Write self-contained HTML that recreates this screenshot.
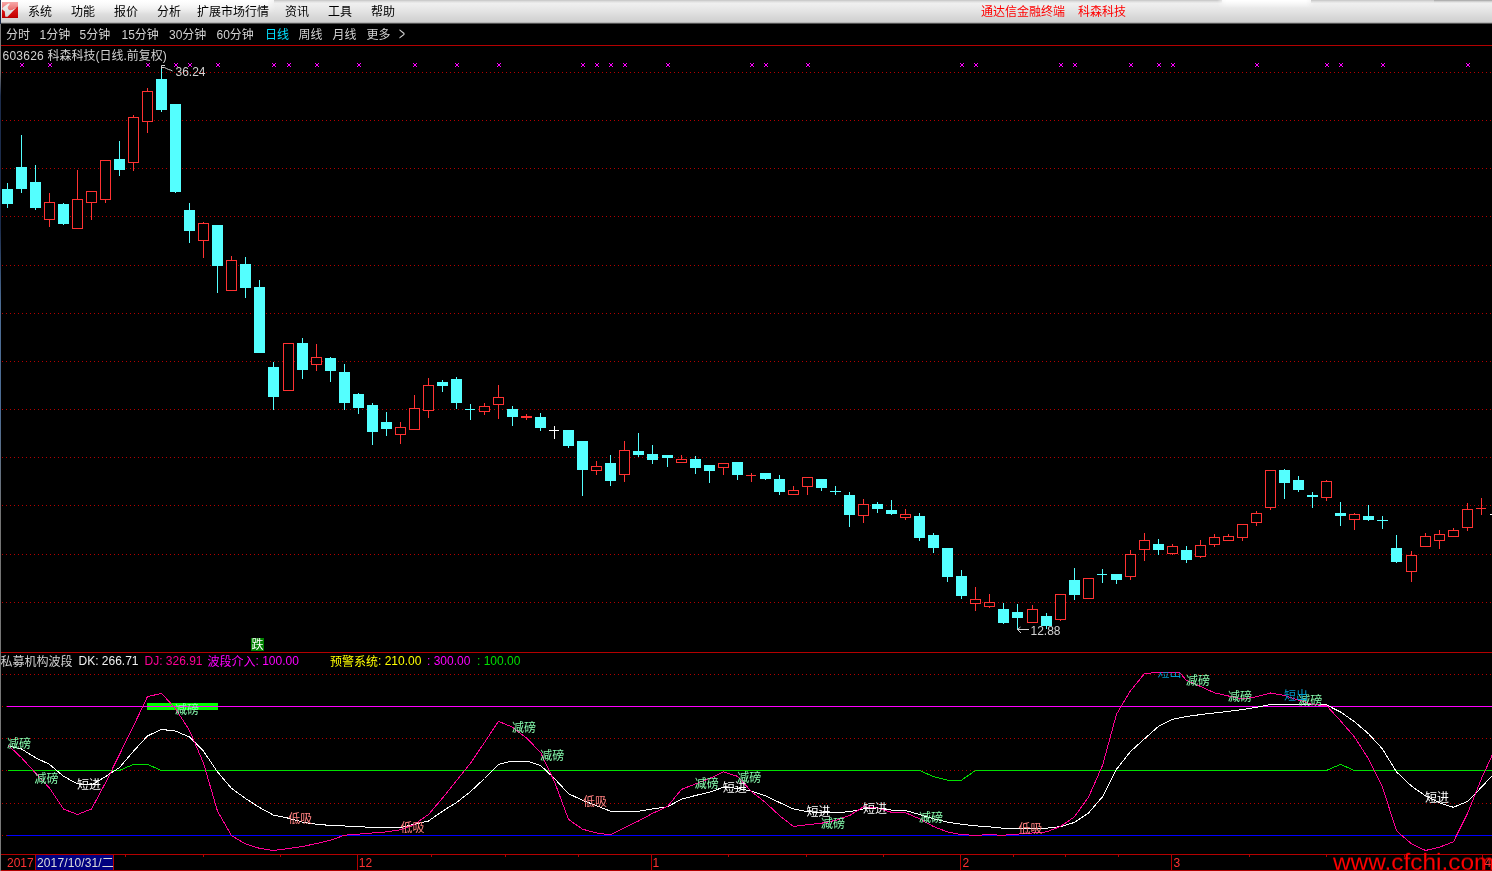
<!DOCTYPE html>
<html lang="zh-CN"><head><meta charset="utf-8"><title>通达信金融终端 科森科技</title>
<style>
html,body{margin:0;padding:0;background:#000;}
body{width:1492px;height:871px;overflow:hidden;position:relative;font-family:"Liberation Sans","Noto Sans CJK SC",sans-serif;font-size:12px;line-height:14px;color:#d2d2d2;}
.abs{position:absolute;white-space:nowrap;}
#menubar{position:absolute;left:0;top:0;width:1492px;height:24px;background:linear-gradient(#f4f4f4 0px,#ececec 6px,#e4e4e4 11px,#d8d8d8 17px,#d0d0d0 22px,#b4b4b4 22px,#b4b4b4 23px,#505050 23px,#505050 24px);}
#menubar .m{position:absolute;top:5px;color:#000;font-size:12px;line-height:14px;white-space:nowrap;}
#menubar .t{position:absolute;top:5px;color:#ff0000;font-size:12px;line-height:14px;white-space:pre;}
#logo{position:absolute;left:2px;top:2px;width:16px;height:16px;}
#tb .p{position:absolute;top:28px;font-size:12px;line-height:14px;color:#d2d2d2;white-space:nowrap;}
#chart{position:absolute;left:0;top:0;will-change:transform;}
#menubar,#tb,#wm{will-change:transform;}
svg text{font-family:"Liberation Sans","Noto Sans CJK SC",sans-serif;font-size:12px;}
#wm{position:absolute;left:1333px;top:849.4px;transform:scaleY(0.945);transform-origin:0 0;font-size:24.4px;line-height:28px;color:#ff0000;white-space:nowrap;}

</style></head><body>
<svg id="chart" width="1492" height="871" viewBox="0 0 1492 871" shape-rendering="crispEdges">
<rect x="0" y="0" width="1492" height="871" fill="#000"/>
<defs><linearGradient id="lb" gradientUnits="userSpaceOnUse" x1="0" y1="24" x2="0" y2="871"><stop offset="0" stop-color="#7c7c7c"/><stop offset="0.055" stop-color="#7c7c7c"/><stop offset="0.085" stop-color="#1c2c4c"/><stop offset="0.24" stop-color="#1c2c4c"/><stop offset="0.33" stop-color="#4c6c94"/><stop offset="0.46" stop-color="#4c6c94"/><stop offset="0.58" stop-color="#747474"/><stop offset="1" stop-color="#7a7a7a"/></linearGradient></defs>
<rect x="0" y="24" width="1" height="847" fill="url(#lb)"/>
<rect x="1" y="45" width="1491" height="1" fill="#b40000"/>
<rect x="1" y="652" width="1491" height="1" fill="#b40000"/>
<rect x="1" y="854" width="1491" height="1" fill="#b40000"/>
<rect x="1" y="870" width="1491" height="1" fill="#b40000"/>
<line x1="2" y1="72.5" x2="1492" y2="72.5" stroke="#b40000" stroke-width="1" stroke-dasharray="1 3"/>
<line x1="2" y1="120.5" x2="1492" y2="120.5" stroke="#b40000" stroke-width="1" stroke-dasharray="1 3"/>
<line x1="2" y1="168.5" x2="1492" y2="168.5" stroke="#b40000" stroke-width="1" stroke-dasharray="1 3"/>
<line x1="2" y1="216.5" x2="1492" y2="216.5" stroke="#b40000" stroke-width="1" stroke-dasharray="1 3"/>
<line x1="2" y1="265.5" x2="1492" y2="265.5" stroke="#b40000" stroke-width="1" stroke-dasharray="1 3"/>
<line x1="2" y1="313.5" x2="1492" y2="313.5" stroke="#b40000" stroke-width="1" stroke-dasharray="1 3"/>
<line x1="2" y1="361.5" x2="1492" y2="361.5" stroke="#b40000" stroke-width="1" stroke-dasharray="1 3"/>
<line x1="2" y1="409.5" x2="1492" y2="409.5" stroke="#b40000" stroke-width="1" stroke-dasharray="1 3"/>
<line x1="2" y1="457.5" x2="1492" y2="457.5" stroke="#b40000" stroke-width="1" stroke-dasharray="1 3"/>
<line x1="2" y1="505.5" x2="1492" y2="505.5" stroke="#b40000" stroke-width="1" stroke-dasharray="1 3"/>
<line x1="2" y1="554.5" x2="1492" y2="554.5" stroke="#b40000" stroke-width="1" stroke-dasharray="1 3"/>
<line x1="2" y1="602.5" x2="1492" y2="602.5" stroke="#b40000" stroke-width="1" stroke-dasharray="1 3"/>
<line x1="2" y1="674.5" x2="1492" y2="674.5" stroke="#b40000" stroke-width="1" stroke-dasharray="1 3"/>
<line x1="2" y1="706.5" x2="1492" y2="706.5" stroke="#b40000" stroke-width="1" stroke-dasharray="1 3"/>
<line x1="2" y1="738.5" x2="1492" y2="738.5" stroke="#b40000" stroke-width="1" stroke-dasharray="1 3"/>
<line x1="2" y1="770.5" x2="1492" y2="770.5" stroke="#b40000" stroke-width="1" stroke-dasharray="1 3"/>
<line x1="2" y1="803.5" x2="1492" y2="803.5" stroke="#b40000" stroke-width="1" stroke-dasharray="1 3"/>
<line x1="2" y1="835.5" x2="1492" y2="835.5" stroke="#b40000" stroke-width="1" stroke-dasharray="1 3"/>
<g stroke="#ff00ff" stroke-width="1" fill="#ff00ff">
<path d="M20 63h1v1h-1zM23 63h1v1h-1zM20 66h1v1h-1zM23 66h1v1h-1zM21 64h2v2h-2z" stroke="none"/>
<path d="M48 63h1v1h-1zM51 63h1v1h-1zM48 66h1v1h-1zM51 66h1v1h-1zM49 64h2v2h-2z" stroke="none"/>
<path d="M146 63h1v1h-1zM149 63h1v1h-1zM146 66h1v1h-1zM149 66h1v1h-1zM147 64h2v2h-2z" stroke="none"/>
<path d="M174 63h1v1h-1zM177 63h1v1h-1zM174 66h1v1h-1zM177 66h1v1h-1zM175 64h2v2h-2z" stroke="none"/>
<path d="M188 63h1v1h-1zM191 63h1v1h-1zM188 66h1v1h-1zM191 66h1v1h-1zM189 64h2v2h-2z" stroke="none"/>
<path d="M216 63h1v1h-1zM219 63h1v1h-1zM216 66h1v1h-1zM219 66h1v1h-1zM217 64h2v2h-2z" stroke="none"/>
<path d="M272 63h1v1h-1zM275 63h1v1h-1zM272 66h1v1h-1zM275 66h1v1h-1zM273 64h2v2h-2z" stroke="none"/>
<path d="M287 63h1v1h-1zM290 63h1v1h-1zM287 66h1v1h-1zM290 66h1v1h-1zM288 64h2v2h-2z" stroke="none"/>
<path d="M315 63h1v1h-1zM318 63h1v1h-1zM315 66h1v1h-1zM318 66h1v1h-1zM316 64h2v2h-2z" stroke="none"/>
<path d="M357 63h1v1h-1zM360 63h1v1h-1zM357 66h1v1h-1zM360 66h1v1h-1zM358 64h2v2h-2z" stroke="none"/>
<path d="M413 63h1v1h-1zM416 63h1v1h-1zM413 66h1v1h-1zM416 66h1v1h-1zM414 64h2v2h-2z" stroke="none"/>
<path d="M455 63h1v1h-1zM458 63h1v1h-1zM455 66h1v1h-1zM458 66h1v1h-1zM456 64h2v2h-2z" stroke="none"/>
<path d="M497 63h1v1h-1zM500 63h1v1h-1zM497 66h1v1h-1zM500 66h1v1h-1zM498 64h2v2h-2z" stroke="none"/>
<path d="M581 63h1v1h-1zM584 63h1v1h-1zM581 66h1v1h-1zM584 66h1v1h-1zM582 64h2v2h-2z" stroke="none"/>
<path d="M595 63h1v1h-1zM598 63h1v1h-1zM595 66h1v1h-1zM598 66h1v1h-1zM596 64h2v2h-2z" stroke="none"/>
<path d="M609 63h1v1h-1zM612 63h1v1h-1zM609 66h1v1h-1zM612 66h1v1h-1zM610 64h2v2h-2z" stroke="none"/>
<path d="M623 63h1v1h-1zM626 63h1v1h-1zM623 66h1v1h-1zM626 66h1v1h-1zM624 64h2v2h-2z" stroke="none"/>
<path d="M666 63h1v1h-1zM669 63h1v1h-1zM666 66h1v1h-1zM669 66h1v1h-1zM667 64h2v2h-2z" stroke="none"/>
<path d="M750 63h1v1h-1zM753 63h1v1h-1zM750 66h1v1h-1zM753 66h1v1h-1zM751 64h2v2h-2z" stroke="none"/>
<path d="M764 63h1v1h-1zM767 63h1v1h-1zM764 66h1v1h-1zM767 66h1v1h-1zM765 64h2v2h-2z" stroke="none"/>
<path d="M806 63h1v1h-1zM809 63h1v1h-1zM806 66h1v1h-1zM809 66h1v1h-1zM807 64h2v2h-2z" stroke="none"/>
<path d="M960 63h1v1h-1zM963 63h1v1h-1zM960 66h1v1h-1zM963 66h1v1h-1zM961 64h2v2h-2z" stroke="none"/>
<path d="M974 63h1v1h-1zM977 63h1v1h-1zM974 66h1v1h-1zM977 66h1v1h-1zM975 64h2v2h-2z" stroke="none"/>
<path d="M1059 63h1v1h-1zM1062 63h1v1h-1zM1059 66h1v1h-1zM1062 66h1v1h-1zM1060 64h2v2h-2z" stroke="none"/>
<path d="M1073 63h1v1h-1zM1076 63h1v1h-1zM1073 66h1v1h-1zM1076 66h1v1h-1zM1074 64h2v2h-2z" stroke="none"/>
<path d="M1129 63h1v1h-1zM1132 63h1v1h-1zM1129 66h1v1h-1zM1132 66h1v1h-1zM1130 64h2v2h-2z" stroke="none"/>
<path d="M1157 63h1v1h-1zM1160 63h1v1h-1zM1157 66h1v1h-1zM1160 66h1v1h-1zM1158 64h2v2h-2z" stroke="none"/>
<path d="M1171 63h1v1h-1zM1174 63h1v1h-1zM1171 66h1v1h-1zM1174 66h1v1h-1zM1172 64h2v2h-2z" stroke="none"/>
<path d="M1255 63h1v1h-1zM1258 63h1v1h-1zM1255 66h1v1h-1zM1258 66h1v1h-1zM1256 64h2v2h-2z" stroke="none"/>
<path d="M1325 63h1v1h-1zM1328 63h1v1h-1zM1325 66h1v1h-1zM1328 66h1v1h-1zM1326 64h2v2h-2z" stroke="none"/>
<path d="M1339 63h1v1h-1zM1342 63h1v1h-1zM1339 66h1v1h-1zM1342 66h1v1h-1zM1340 64h2v2h-2z" stroke="none"/>
<path d="M1381 63h1v1h-1zM1384 63h1v1h-1zM1381 66h1v1h-1zM1384 66h1v1h-1zM1382 64h2v2h-2z" stroke="none"/>
<path d="M1466 63h1v1h-1zM1469 63h1v1h-1zM1466 66h1v1h-1zM1469 66h1v1h-1zM1467 64h2v2h-2z" stroke="none"/>
</g>
<rect x="7" y="183" width="1" height="25" fill="#54ffff"/>
<rect x="2" y="189" width="11" height="15" fill="#54ffff"/>
<rect x="21" y="135" width="1" height="58" fill="#54ffff"/>
<rect x="16" y="167" width="11" height="22" fill="#54ffff"/>
<rect x="35" y="165" width="1" height="45" fill="#54ffff"/>
<rect x="30" y="182" width="11" height="26" fill="#54ffff"/>
<rect x="49" y="193" width="1" height="9" fill="#ff3232"/>
<rect x="49" y="220" width="1" height="7" fill="#ff3232"/>
<rect x="44.5" y="202.5" width="10" height="17" fill="#000" stroke="#ff3232" stroke-width="1"/>
<rect x="63" y="203" width="1" height="22" fill="#54ffff"/>
<rect x="58" y="204" width="11" height="20" fill="#54ffff"/>
<rect x="77" y="170" width="1" height="29" fill="#ff3232"/>
<rect x="72.5" y="199.5" width="10" height="29" fill="#000" stroke="#ff3232" stroke-width="1"/>
<rect x="91" y="203" width="1" height="17" fill="#ff3232"/>
<rect x="86.5" y="191.5" width="10" height="11" fill="#000" stroke="#ff3232" stroke-width="1"/>
<rect x="105" y="200" width="1" height="3" fill="#ff3232"/>
<rect x="100.5" y="160.5" width="10" height="39" fill="#000" stroke="#ff3232" stroke-width="1"/>
<rect x="119" y="141" width="1" height="35" fill="#54ffff"/>
<rect x="114" y="159" width="11" height="11" fill="#54ffff"/>
<rect x="133" y="115" width="1" height="2" fill="#ff3232"/>
<rect x="133" y="163" width="1" height="8" fill="#ff3232"/>
<rect x="128.5" y="117.5" width="10" height="45" fill="#000" stroke="#ff3232" stroke-width="1"/>
<rect x="147" y="88" width="1" height="3" fill="#ff3232"/>
<rect x="147" y="122" width="1" height="11" fill="#ff3232"/>
<rect x="142.5" y="91.5" width="10" height="30" fill="#000" stroke="#ff3232" stroke-width="1"/>
<rect x="161" y="69" width="1" height="43" fill="#54ffff"/>
<rect x="156" y="79" width="11" height="31" fill="#54ffff"/>
<rect x="175" y="104" width="1" height="89" fill="#54ffff"/>
<rect x="170" y="104" width="11" height="88" fill="#54ffff"/>
<rect x="189" y="203" width="1" height="40" fill="#54ffff"/>
<rect x="184" y="210" width="11" height="21" fill="#54ffff"/>
<rect x="203" y="222" width="1" height="1" fill="#ff3232"/>
<rect x="203" y="241" width="1" height="17" fill="#ff3232"/>
<rect x="198.5" y="223.5" width="10" height="17" fill="#000" stroke="#ff3232" stroke-width="1"/>
<rect x="217" y="225" width="1" height="68" fill="#54ffff"/>
<rect x="212" y="225" width="11" height="41" fill="#54ffff"/>
<rect x="231" y="256" width="1" height="4" fill="#ff3232"/>
<rect x="226.5" y="260.5" width="10" height="30" fill="#000" stroke="#ff3232" stroke-width="1"/>
<rect x="245" y="257" width="1" height="41" fill="#54ffff"/>
<rect x="240" y="264" width="11" height="24" fill="#54ffff"/>
<rect x="259" y="280" width="1" height="73" fill="#54ffff"/>
<rect x="254" y="287" width="11" height="66" fill="#54ffff"/>
<rect x="273" y="362" width="1" height="48" fill="#54ffff"/>
<rect x="268" y="367" width="11" height="30" fill="#54ffff"/>
<rect x="283.5" y="343.5" width="10" height="47" fill="#000" stroke="#ff3232" stroke-width="1"/>
<rect x="302" y="338" width="1" height="41" fill="#54ffff"/>
<rect x="297" y="343" width="11" height="27" fill="#54ffff"/>
<rect x="316" y="344" width="1" height="13" fill="#ff3232"/>
<rect x="316" y="365" width="1" height="6" fill="#ff3232"/>
<rect x="311.5" y="357.5" width="10" height="7" fill="#000" stroke="#ff3232" stroke-width="1"/>
<rect x="330" y="357" width="1" height="25" fill="#54ffff"/>
<rect x="325" y="358" width="11" height="13" fill="#54ffff"/>
<rect x="344" y="364" width="1" height="46" fill="#54ffff"/>
<rect x="339" y="372" width="11" height="31" fill="#54ffff"/>
<rect x="358" y="393" width="1" height="21" fill="#54ffff"/>
<rect x="353" y="394" width="11" height="14" fill="#54ffff"/>
<rect x="372" y="403" width="1" height="42" fill="#54ffff"/>
<rect x="367" y="405" width="11" height="27" fill="#54ffff"/>
<rect x="386" y="412" width="1" height="24" fill="#54ffff"/>
<rect x="381" y="422" width="11" height="7" fill="#54ffff"/>
<rect x="400" y="422" width="1" height="5" fill="#ff3232"/>
<rect x="400" y="435" width="1" height="9" fill="#ff3232"/>
<rect x="395.5" y="427.5" width="10" height="7" fill="#000" stroke="#ff3232" stroke-width="1"/>
<rect x="414" y="395" width="1" height="13" fill="#ff3232"/>
<rect x="409.5" y="408.5" width="10" height="21" fill="#000" stroke="#ff3232" stroke-width="1"/>
<rect x="428" y="378" width="1" height="7" fill="#ff3232"/>
<rect x="428" y="411" width="1" height="7" fill="#ff3232"/>
<rect x="423.5" y="385.5" width="10" height="25" fill="#000" stroke="#ff3232" stroke-width="1"/>
<rect x="442" y="380" width="1" height="12" fill="#54ffff"/>
<rect x="437" y="382" width="11" height="4" fill="#54ffff"/>
<rect x="456" y="377" width="1" height="32" fill="#54ffff"/>
<rect x="451" y="379" width="11" height="24" fill="#54ffff"/>
<rect x="470" y="404" width="1" height="16" fill="#54ffff"/>
<rect x="465" y="409" width="10" height="1" fill="#54ffff"/>
<rect x="484" y="403" width="1" height="3" fill="#ff3232"/>
<rect x="484" y="412" width="1" height="3" fill="#ff3232"/>
<rect x="479.5" y="406.5" width="10" height="5" fill="#000" stroke="#ff3232" stroke-width="1"/>
<rect x="498" y="385" width="1" height="12" fill="#ff3232"/>
<rect x="498" y="405" width="1" height="14" fill="#ff3232"/>
<rect x="493.5" y="397.5" width="10" height="7" fill="#000" stroke="#ff3232" stroke-width="1"/>
<rect x="512" y="406" width="1" height="20" fill="#54ffff"/>
<rect x="507" y="409" width="11" height="8" fill="#54ffff"/>
<rect x="526" y="414" width="1" height="6" fill="#ff3232"/>
<rect x="521" y="416" width="11" height="2" fill="#ff3232"/>
<rect x="540" y="413" width="1" height="18" fill="#54ffff"/>
<rect x="535" y="417" width="11" height="11" fill="#54ffff"/>
<rect x="554" y="426" width="1" height="13" fill="#ffffff"/>
<rect x="549" y="430" width="10" height="1" fill="#ffffff"/>
<rect x="568" y="430" width="1" height="18" fill="#54ffff"/>
<rect x="563" y="430" width="11" height="16" fill="#54ffff"/>
<rect x="582" y="441" width="1" height="55" fill="#54ffff"/>
<rect x="577" y="441" width="11" height="29" fill="#54ffff"/>
<rect x="596" y="461" width="1" height="5" fill="#ff3232"/>
<rect x="596" y="471" width="1" height="4" fill="#ff3232"/>
<rect x="591.5" y="466.5" width="10" height="4" fill="#000" stroke="#ff3232" stroke-width="1"/>
<rect x="610" y="455" width="1" height="31" fill="#54ffff"/>
<rect x="605" y="463" width="11" height="18" fill="#54ffff"/>
<rect x="624" y="441" width="1" height="9" fill="#ff3232"/>
<rect x="624" y="475" width="1" height="7" fill="#ff3232"/>
<rect x="619.5" y="450.5" width="10" height="24" fill="#000" stroke="#ff3232" stroke-width="1"/>
<rect x="638" y="433" width="1" height="24" fill="#54ffff"/>
<rect x="633" y="451" width="11" height="4" fill="#54ffff"/>
<rect x="652" y="445" width="1" height="19" fill="#54ffff"/>
<rect x="647" y="454" width="11" height="6" fill="#54ffff"/>
<rect x="667" y="455" width="1" height="12" fill="#54ffff"/>
<rect x="662" y="455" width="11" height="3" fill="#54ffff"/>
<rect x="681" y="455" width="1" height="4" fill="#ff3232"/>
<rect x="676.5" y="459.5" width="10" height="3" fill="#000" stroke="#ff3232" stroke-width="1"/>
<rect x="695" y="456" width="1" height="18" fill="#54ffff"/>
<rect x="690" y="459" width="11" height="9" fill="#54ffff"/>
<rect x="709" y="465" width="1" height="18" fill="#54ffff"/>
<rect x="704" y="465" width="11" height="6" fill="#54ffff"/>
<rect x="723" y="468" width="1" height="7" fill="#ff3232"/>
<rect x="718.5" y="463.5" width="10" height="4" fill="#000" stroke="#ff3232" stroke-width="1"/>
<rect x="737" y="462" width="1" height="18" fill="#54ffff"/>
<rect x="732" y="462" width="11" height="13" fill="#54ffff"/>
<rect x="751" y="473" width="1" height="9" fill="#ff3232"/>
<rect x="746" y="475" width="10" height="1" fill="#ff3232"/>
<rect x="765" y="473" width="1" height="7" fill="#54ffff"/>
<rect x="760" y="473" width="11" height="6" fill="#54ffff"/>
<rect x="779" y="475" width="1" height="20" fill="#54ffff"/>
<rect x="774" y="479" width="11" height="13" fill="#54ffff"/>
<rect x="793" y="486" width="1" height="4" fill="#ff3232"/>
<rect x="788.5" y="490.5" width="10" height="4" fill="#000" stroke="#ff3232" stroke-width="1"/>
<rect x="807" y="487" width="1" height="8" fill="#ff3232"/>
<rect x="802.5" y="477.5" width="10" height="9" fill="#000" stroke="#ff3232" stroke-width="1"/>
<rect x="821" y="479" width="1" height="12" fill="#54ffff"/>
<rect x="816" y="479" width="11" height="9" fill="#54ffff"/>
<rect x="835" y="486" width="1" height="9" fill="#54ffff"/>
<rect x="830" y="491" width="11" height="1" fill="#54ffff"/>
<rect x="849" y="492" width="1" height="35" fill="#54ffff"/>
<rect x="844" y="495" width="11" height="20" fill="#54ffff"/>
<rect x="863" y="499" width="1" height="5" fill="#ff3232"/>
<rect x="863" y="516" width="1" height="7" fill="#ff3232"/>
<rect x="858.5" y="504.5" width="10" height="11" fill="#000" stroke="#ff3232" stroke-width="1"/>
<rect x="877" y="502" width="1" height="11" fill="#54ffff"/>
<rect x="872" y="504" width="11" height="5" fill="#54ffff"/>
<rect x="891" y="500" width="1" height="15" fill="#54ffff"/>
<rect x="886" y="510" width="11" height="4" fill="#54ffff"/>
<rect x="905" y="509" width="1" height="5" fill="#ff3232"/>
<rect x="905" y="518" width="1" height="2" fill="#ff3232"/>
<rect x="900.5" y="514.5" width="10" height="3" fill="#000" stroke="#ff3232" stroke-width="1"/>
<rect x="919" y="513" width="1" height="28" fill="#54ffff"/>
<rect x="914" y="516" width="11" height="22" fill="#54ffff"/>
<rect x="933" y="533" width="1" height="20" fill="#54ffff"/>
<rect x="928" y="535" width="11" height="13" fill="#54ffff"/>
<rect x="947" y="548" width="1" height="34" fill="#54ffff"/>
<rect x="942" y="548" width="11" height="29" fill="#54ffff"/>
<rect x="961" y="570" width="1" height="29" fill="#54ffff"/>
<rect x="956" y="576" width="11" height="20" fill="#54ffff"/>
<rect x="975" y="587" width="1" height="12" fill="#ff3232"/>
<rect x="975" y="604" width="1" height="7" fill="#ff3232"/>
<rect x="970.5" y="599.5" width="10" height="4" fill="#000" stroke="#ff3232" stroke-width="1"/>
<rect x="989" y="594" width="1" height="8" fill="#ff3232"/>
<rect x="989" y="607" width="1" height="1" fill="#ff3232"/>
<rect x="984.5" y="602.5" width="10" height="4" fill="#000" stroke="#ff3232" stroke-width="1"/>
<rect x="1003" y="603" width="1" height="21" fill="#54ffff"/>
<rect x="998" y="609" width="11" height="14" fill="#54ffff"/>
<rect x="1017" y="604" width="1" height="26" fill="#54ffff"/>
<rect x="1012" y="612" width="11" height="6" fill="#54ffff"/>
<rect x="1032" y="605" width="1" height="4" fill="#ff3232"/>
<rect x="1027.5" y="609.5" width="10" height="13" fill="#000" stroke="#ff3232" stroke-width="1"/>
<rect x="1046" y="613" width="1" height="16" fill="#54ffff"/>
<rect x="1041" y="616" width="11" height="10" fill="#54ffff"/>
<rect x="1060" y="620" width="1" height="1" fill="#ff3232"/>
<rect x="1055.5" y="594.5" width="10" height="25" fill="#000" stroke="#ff3232" stroke-width="1"/>
<rect x="1074" y="568" width="1" height="32" fill="#54ffff"/>
<rect x="1069" y="580" width="11" height="15" fill="#54ffff"/>
<rect x="1083.5" y="578.5" width="10" height="20" fill="#000" stroke="#ff3232" stroke-width="1"/>
<rect x="1102" y="569" width="1" height="14" fill="#54ffff"/>
<rect x="1097" y="574" width="10" height="1" fill="#54ffff"/>
<rect x="1116" y="574" width="1" height="10" fill="#54ffff"/>
<rect x="1111" y="574" width="11" height="6" fill="#54ffff"/>
<rect x="1130" y="550" width="1" height="4" fill="#ff3232"/>
<rect x="1130" y="577" width="1" height="3" fill="#ff3232"/>
<rect x="1125.5" y="554.5" width="10" height="22" fill="#000" stroke="#ff3232" stroke-width="1"/>
<rect x="1144" y="533" width="1" height="7" fill="#ff3232"/>
<rect x="1144" y="550" width="1" height="11" fill="#ff3232"/>
<rect x="1139.5" y="540.5" width="10" height="9" fill="#000" stroke="#ff3232" stroke-width="1"/>
<rect x="1158" y="539" width="1" height="16" fill="#54ffff"/>
<rect x="1153" y="544" width="11" height="6" fill="#54ffff"/>
<rect x="1172" y="544" width="1" height="2" fill="#ff3232"/>
<rect x="1172" y="554" width="1" height="1" fill="#ff3232"/>
<rect x="1167.5" y="546.5" width="10" height="7" fill="#000" stroke="#ff3232" stroke-width="1"/>
<rect x="1186" y="546" width="1" height="17" fill="#54ffff"/>
<rect x="1181" y="550" width="11" height="10" fill="#54ffff"/>
<rect x="1200" y="540" width="1" height="5" fill="#ff3232"/>
<rect x="1200" y="557" width="1" height="1" fill="#ff3232"/>
<rect x="1195.5" y="545.5" width="10" height="11" fill="#000" stroke="#ff3232" stroke-width="1"/>
<rect x="1214" y="534" width="1" height="3" fill="#ff3232"/>
<rect x="1214" y="545" width="1" height="2" fill="#ff3232"/>
<rect x="1209.5" y="537.5" width="10" height="7" fill="#000" stroke="#ff3232" stroke-width="1"/>
<rect x="1228" y="534" width="1" height="2" fill="#ff3232"/>
<rect x="1223.5" y="536.5" width="10" height="4" fill="#000" stroke="#ff3232" stroke-width="1"/>
<rect x="1242" y="538" width="1" height="3" fill="#ff3232"/>
<rect x="1237.5" y="524.5" width="10" height="13" fill="#000" stroke="#ff3232" stroke-width="1"/>
<rect x="1256" y="511" width="1" height="2" fill="#ff3232"/>
<rect x="1256" y="523" width="1" height="3" fill="#ff3232"/>
<rect x="1251.5" y="513.5" width="10" height="9" fill="#000" stroke="#ff3232" stroke-width="1"/>
<rect x="1270" y="508" width="1" height="2" fill="#ff3232"/>
<rect x="1265.5" y="470.5" width="10" height="37" fill="#000" stroke="#ff3232" stroke-width="1"/>
<rect x="1284" y="469" width="1" height="30" fill="#54ffff"/>
<rect x="1279" y="470" width="11" height="13" fill="#54ffff"/>
<rect x="1298" y="476" width="1" height="16" fill="#54ffff"/>
<rect x="1293" y="480" width="11" height="10" fill="#54ffff"/>
<rect x="1312" y="492" width="1" height="16" fill="#54ffff"/>
<rect x="1307" y="495" width="11" height="2" fill="#54ffff"/>
<rect x="1326" y="480" width="1" height="1" fill="#ff3232"/>
<rect x="1326" y="498" width="1" height="3" fill="#ff3232"/>
<rect x="1321.5" y="481.5" width="10" height="16" fill="#000" stroke="#ff3232" stroke-width="1"/>
<rect x="1340" y="502" width="1" height="24" fill="#54ffff"/>
<rect x="1335" y="513" width="11" height="3" fill="#54ffff"/>
<rect x="1354" y="513" width="1" height="1" fill="#ff3232"/>
<rect x="1354" y="520" width="1" height="10" fill="#ff3232"/>
<rect x="1349.5" y="514.5" width="10" height="5" fill="#000" stroke="#ff3232" stroke-width="1"/>
<rect x="1368" y="505" width="1" height="16" fill="#54ffff"/>
<rect x="1363" y="516" width="11" height="4" fill="#54ffff"/>
<rect x="1382" y="516" width="1" height="13" fill="#54ffff"/>
<rect x="1377" y="520" width="11" height="1" fill="#54ffff"/>
<rect x="1396" y="535" width="1" height="28" fill="#54ffff"/>
<rect x="1391" y="548" width="11" height="14" fill="#54ffff"/>
<rect x="1411" y="551" width="1" height="4" fill="#ff3232"/>
<rect x="1411" y="572" width="1" height="10" fill="#ff3232"/>
<rect x="1406.5" y="555.5" width="10" height="16" fill="#000" stroke="#ff3232" stroke-width="1"/>
<rect x="1425" y="533" width="1" height="3" fill="#ff3232"/>
<rect x="1420.5" y="536.5" width="10" height="10" fill="#000" stroke="#ff3232" stroke-width="1"/>
<rect x="1439" y="530" width="1" height="4" fill="#ff3232"/>
<rect x="1439" y="541" width="1" height="8" fill="#ff3232"/>
<rect x="1434.5" y="534.5" width="10" height="6" fill="#000" stroke="#ff3232" stroke-width="1"/>
<rect x="1453" y="528" width="1" height="2" fill="#ff3232"/>
<rect x="1448.5" y="530.5" width="10" height="6" fill="#000" stroke="#ff3232" stroke-width="1"/>
<rect x="1467" y="503" width="1" height="6" fill="#ff3232"/>
<rect x="1467" y="528" width="1" height="3" fill="#ff3232"/>
<rect x="1462.5" y="509.5" width="10" height="18" fill="#000" stroke="#ff3232" stroke-width="1"/>
<rect x="1481" y="498" width="1" height="17" fill="#ff3232"/>
<rect x="1476" y="508" width="10" height="1" fill="#ff3232"/>
<rect x="1490" y="514" width="2" height="1" fill="#ffffff"/>
<path d="M161.5 69V65.5H165M161.5 67.5h3l2 1l2 1l2 0.5l2 1" fill="none" stroke="#d2d2d2" stroke-width="1" shape-rendering="auto"/>
<text x="175.5" y="76" fill="#d2d2d2">36.24</text>
<path d="M1017.5 629.5H1029M1020.5 627L1017.5 629.5L1021 633" fill="none" stroke="#d2d2d2" stroke-width="1" shape-rendering="auto"/>
<text x="1030.5" y="635" fill="#d2d2d2">12.88</text>
<text x="2.5" y="60" fill="#d2d2d2"><tspan letter-spacing="0.25">603626</tspan> 科森科技(日线.前复权)</text>
<rect x="251" y="638" width="13" height="13" fill="#008000"/>
<text x="251.5" y="649" fill="#ffffff">跌</text>
<text x="0.5" y="665.5" fill="#d2d2d2">私募机构波段</text>
<text x="78.5" y="664.5" fill="#f0f0f0">DK: 266.71</text>
<text x="144.5" y="664.5" fill="#ff0096">DJ: 326.91</text>
<text x="207.5" y="664.5" fill="#ff00ff"><tspan dy="1">波段介入</tspan><tspan dy="-1">: 100.00</tspan></text>
<text x="330" y="664.5" fill="#ffff00"><tspan dy="1">预警系统</tspan><tspan dy="-1">: 210.00</tspan></text>
<text x="427" y="664.5" fill="#ff00ff">: 300.00</text>
<text x="477" y="664.5" fill="#00e000">: 100.00</text>
<clipPath id="sc"><rect x="0" y="672" width="1492" height="182"/></clipPath>
<g clip-path="url(#sc)">
<rect x="7" y="706" width="1485" height="1" fill="#ff00ff"/>
<rect x="7" y="835" width="1485" height="1" fill="#0000ff"/>
<rect x="147" y="703" width="71" height="7" fill="#00ff00"/>
<rect x="147" y="706" width="71" height="1" fill="#ff00ff"/>
<polyline fill="none" stroke="#00e000" stroke-width="1" points="7.5,770.5 21.5,770.5 35.5,770.5 49.5,770.5 63.5,770.5 77.5,770.5 91.5,770.5 105.5,770.5 119.5,770.5 133.5,764.3 147.5,764.3 161.5,770.5 175.5,770.5 189.5,770.5 203.5,770.5 217.5,770.5 231.5,770.5 245.5,770.5 259.5,770.5 273.5,770.5 288.5,770.5 302.5,770.5 316.5,770.5 330.5,770.5 344.5,770.5 358.5,770.5 372.5,770.5 386.5,770.5 400.5,770.5 414.5,770.5 428.5,770.5 442.5,770.5 456.5,770.5 470.5,770.5 484.5,770.5 498.5,770.5 512.5,770.5 526.5,770.5 540.5,770.5 554.5,770.5 568.5,770.5 582.5,770.5 596.5,770.5 610.5,770.5 624.5,770.5 638.5,770.5 652.5,770.5 667.5,770.5 681.5,770.5 695.5,770.5 709.5,770.5 723.5,770.5 737.5,770.5 751.5,770.5 765.5,770.5 779.5,770.5 793.5,770.5 807.5,770.5 821.5,770.5 835.5,770.5 849.5,770.5 863.5,770.5 877.5,770.5 891.5,770.5 905.5,770.5 919.5,770.5 933.5,776.7 947.5,780.2 961.5,780.2 975.5,770.5 989.5,770.5 1003.5,770.5 1017.5,770.5 1032.5,770.5 1046.5,770.5 1060.5,770.5 1074.5,770.5 1088.5,770.5 1102.5,770.5 1116.5,770.5 1130.5,770.5 1144.5,770.5 1158.5,770.5 1172.5,770.5 1186.5,770.5 1200.5,770.5 1214.5,770.5 1228.5,770.5 1242.5,770.5 1256.5,770.5 1270.5,770.5 1284.5,770.5 1298.5,770.5 1312.5,770.5 1326.5,770.5 1340.5,764.3 1354.5,770.5 1368.5,770.5 1382.5,770.5 1396.5,770.5 1411.5,770.5 1425.5,770.5 1439.5,770.5 1453.5,770.5 1467.5,770.5 1481.5,770.5 1495.5,770.5"/>
<polyline fill="none" stroke="#ffffff" stroke-width="1" points="7.5,745.7 21.5,749.0 35.5,757.7 49.5,764.3 63.5,776.3 77.5,783.9 91.5,785.0 105.5,776.7 119.5,767.5 133.5,751.2 147.5,735.9 161.5,729.4 175.5,731.1 189.5,737.0 203.5,751.2 217.5,771.9 231.5,788.3 245.5,798.5 259.5,807.5 273.5,815.1 288.5,818.2 302.5,822.1 316.5,824.3 330.5,825.4 344.5,826.0 358.5,826.5 372.5,827.6 386.5,827.6 400.5,827.6 414.5,824.3 428.5,821.0 442.5,811.2 456.5,802.5 470.5,791.6 484.5,778.5 498.5,764.3 512.5,761.0 526.5,761.0 540.5,765.4 554.5,778.5 568.5,793.7 582.5,800.3 596.5,805.7 610.5,811.2 624.5,811.2 638.5,811.2 652.5,809.0 667.5,806.8 681.5,799.2 695.5,795.5 709.5,792.2 723.5,787.2 737.5,788.3 751.5,791.1 765.5,795.9 779.5,802.5 793.5,809.0 807.5,811.6 821.5,812.9 835.5,812.9 849.5,811.6 863.5,809.0 877.5,807.9 891.5,810.1 905.5,810.5 919.5,814.5 933.5,818.8 947.5,822.1 961.5,824.3 975.5,825.8 989.5,826.9 1003.5,828.2 1017.5,828.2 1032.5,828.2 1046.5,828.2 1060.5,826.6 1074.5,822.4 1088.5,813.0 1102.5,796.8 1116.5,769.3 1130.5,751.5 1144.5,738.8 1158.5,726.4 1172.5,719.4 1186.5,716.5 1200.5,714.6 1214.5,712.9 1228.5,711.4 1242.5,709.5 1256.5,707.3 1270.5,704.6 1284.5,704.2 1298.5,704.2 1312.5,704.6 1326.5,704.9 1340.5,712.0 1354.5,721.7 1368.5,733.7 1382.5,749.0 1396.5,771.9 1411.5,786.1 1425.5,795.9 1439.5,802.9 1453.5,807.3 1467.5,801.4 1481.5,787.2 1495.5,771.9"/>
<polyline fill="none" stroke="#ff0096" stroke-width="1" points="7.5,744.6 21.5,757.7 35.5,773.0 49.5,788.0 63.5,809.0 77.5,814.5 91.5,809.0 105.5,782.8 119.5,754.5 133.5,726.0 147.5,696.6 161.5,693.4 175.5,708.6 189.5,730.5 203.5,763.2 217.5,811.2 231.5,835.6 245.5,843.9 259.5,848.3 273.5,850.5 288.5,848.5 302.5,846.5 316.5,843.5 330.5,840.2 344.5,835.2 358.5,834.1 372.5,833.0 386.5,831.9 400.5,829.7 414.5,824.3 428.5,814.5 442.5,798.1 456.5,780.6 470.5,763.2 484.5,742.5 498.5,721.3 512.5,727.2 526.5,738.1 540.5,752.3 554.5,781.7 568.5,819.4 582.5,829.2 596.5,833.0 610.5,834.8 624.5,827.6 638.5,821.0 652.5,813.4 667.5,806.4 681.5,789.4 695.5,783.9 709.5,778.5 723.5,771.9 737.5,776.3 751.5,791.6 765.5,802.5 779.5,815.6 793.5,826.5 807.5,824.7 821.5,823.2 835.5,820.4 849.5,815.6 863.5,806.8 877.5,807.9 891.5,812.3 905.5,812.7 919.5,818.8 933.5,826.5 947.5,831.9 961.5,834.8 975.5,835.2 989.5,834.8 1003.5,835.2 1017.5,834.1 1032.5,833.0 1046.5,831.9 1060.5,826.4 1074.5,816.8 1088.5,797.2 1102.5,765.5 1116.5,714.2 1130.5,690.8 1144.5,673.6 1158.5,672.4 1172.5,672.4 1179.5,672.4 1186.5,680.5 1200.5,686.4 1214.5,692.8 1228.5,696.0 1242.5,699.0 1256.5,696.8 1270.5,693.0 1284.5,695.5 1298.5,700.0 1312.5,704.4 1326.5,705.5 1340.5,720.8 1354.5,737.0 1368.5,758.8 1382.5,787.2 1396.5,830.8 1411.5,843.9 1425.5,850.5 1439.5,847.2 1453.5,841.7 1467.5,813.4 1481.5,778.5 1495.5,747.9"/>
<text x="7.1" y="747.5" fill="#88ffb0">减磅</text>
<text x="34.5" y="782.5" fill="#88ffb0">减磅</text>
<text x="175.1" y="713.5" fill="#88ffb0">减磅</text>
<text x="511.9" y="731.5" fill="#88ffb0">减磅</text>
<text x="540.2" y="760.0" fill="#88ffb0">减磅</text>
<text x="694.8" y="787.9" fill="#88ffb0">减磅</text>
<text x="737.3" y="781.5" fill="#88ffb0">减磅</text>
<text x="820.9" y="827.5" fill="#88ffb0">减磅</text>
<text x="919.1" y="821.7" fill="#88ffb0">减磅</text>
<text x="1185.9" y="684.7" fill="#88ffb0">减磅</text>
<text x="1228.0" y="700.9" fill="#88ffb0">减磅</text>
<text x="1298.2" y="704.8" fill="#88ffb0">减磅</text>
<text x="77.0" y="789.0" fill="#ffffff">短进</text>
<text x="722.7" y="792.2" fill="#ffffff">短进</text>
<text x="806.5" y="815.5" fill="#ffffff">短进</text>
<text x="863.1" y="812.5" fill="#ffffff">短进</text>
<text x="1425.0" y="801.5" fill="#ffffff">短进</text>
<text x="288.3" y="822.5" fill="#ff8080">低吸</text>
<text x="400.5" y="831.5" fill="#ff8080">低吸</text>
<text x="583.1" y="806.2" fill="#ff8080">低吸</text>
<text x="1018.5" y="832.8" fill="#ff8080">低吸</text>
<text x="1157.5" y="676.5" fill="#0099cc">短出</text>
<text x="1284.1" y="699.8" fill="#0099cc">短出</text>
</g>
<rect x="35" y="855" width="1" height="15" fill="#b40000"/>
<rect x="36" y="855" width="77" height="15" fill="#000080"/>
<rect x="113" y="855" width="1" height="15" fill="#b40000"/>
<rect x="357" y="855" width="1" height="15" fill="#b40000"/>
<rect x="651" y="855" width="1" height="15" fill="#b40000"/>
<rect x="960" y="855" width="1" height="15" fill="#b40000"/>
<rect x="1171" y="855" width="1" height="15" fill="#b40000"/>
<rect x="1482" y="855" width="1" height="15" fill="#b40000"/>
<rect x="125" y="855" width="1" height="2" fill="#b40000"/>
<rect x="203" y="855" width="1" height="2" fill="#b40000"/>
<rect x="280" y="855" width="1" height="2" fill="#b40000"/>
<rect x="431" y="855" width="1" height="2" fill="#b40000"/>
<rect x="505" y="855" width="1" height="2" fill="#b40000"/>
<rect x="578" y="855" width="1" height="2" fill="#b40000"/>
<rect x="728" y="855" width="1" height="2" fill="#b40000"/>
<rect x="806" y="855" width="1" height="2" fill="#b40000"/>
<rect x="883" y="855" width="1" height="2" fill="#b40000"/>
<rect x="1013" y="855" width="1" height="2" fill="#b40000"/>
<rect x="1065" y="855" width="1" height="2" fill="#b40000"/>
<rect x="1118" y="855" width="1" height="2" fill="#b40000"/>
<rect x="1249" y="855" width="1" height="2" fill="#b40000"/>
<rect x="1326" y="855" width="1" height="2" fill="#b40000"/>
<rect x="1404" y="855" width="1" height="2" fill="#b40000"/>
<text x="7" y="867" fill="#ff3232">2017</text>
<text x="37" y="867" fill="#dcdcdc" letter-spacing="0.12">2017/10/31/二</text>
<text x="358.8" y="867" fill="#ff3232">12</text>
<text x="652.5" y="867" fill="#ff3232">1</text>
<text x="962.5" y="867" fill="#ff3232">2</text>
<text x="1173.5" y="867" fill="#ff3232">3</text>
<text x="1484.5" y="867" fill="#ff3232">4</text>
</svg>
<div id="menubar">
<div style="position:absolute;left:0;top:0;width:268px;height:14px;background:linear-gradient(#ffffff 0px,rgba(255,255,255,0) 14px)"></div>
<div style="position:absolute;left:268px;top:0;width:8px;height:14px;background:linear-gradient(to right,rgba(255,255,255,0.7),rgba(255,255,255,0));-webkit-mask-image:linear-gradient(#000,transparent);mask-image:linear-gradient(#000,transparent)"></div>
<div style="position:absolute;left:274px;top:0;width:948px;height:3px;background:linear-gradient(#c2c2c2 0px,#d6d6d6 1px,#e4e4e4 2px,#ebebeb 3px)"></div>
<div style="position:absolute;left:1217px;top:0;width:98px;height:8px;background:linear-gradient(to right,rgba(255,255,255,0) 0px,#ffffff 9px,#ffffff 89px,rgba(255,255,255,0) 98px);-webkit-mask-image:linear-gradient(#000,transparent);mask-image:linear-gradient(#000,transparent)"></div>
<div style="position:absolute;left:1311px;top:0;width:123px;height:3px;background:linear-gradient(#c2c2c2 0px,#d6d6d6 1px,#e4e4e4 2px,#ebebeb 3px)"></div>
<div style="position:absolute;left:1434px;top:0;width:58px;height:3px;background:linear-gradient(#9c9c9c 0px,#c4c4c4 1px,#dedede 2px,#ebebeb 3px)"></div>
<div style="position:absolute;left:0;top:0;width:1px;height:24px;background:#1c2a4a"></div>
<svg id="logo" viewBox="0 0 16 16"><defs><linearGradient id="lg1" x1="0" y1="0" x2="0" y2="1"><stop offset="0" stop-color="#f7a8a8"/><stop offset="1" stop-color="#ea6c6c"/></linearGradient><linearGradient id="lg2" x1="0" y1="0" x2="0" y2="1"><stop offset="0" stop-color="#e03030"/><stop offset="0.5" stop-color="#d41818"/><stop offset="0.92" stop-color="#c80000"/><stop offset="1" stop-color="#a80000"/></linearGradient><linearGradient id="lg3" x1="0" y1="0" x2="0" y2="1"><stop offset="0" stop-color="#f4f4f4"/><stop offset="1" stop-color="#d4d4d4"/></linearGradient></defs><rect width="16" height="16" fill="url(#lg2)"/><path d="M0 0H16V4.6L8.5 8.6L0 7.6Z" fill="url(#lg1)"/><path d="M7.1 1.3L4.8 2.6L1.4 4.9L0.1 6.7L0.9 8.1L2.8 9.5L3.2 14.1L3.4 14.8L5.5 14.8L8 12.3L10.8 9.3L14 5.9L14.9 5.2L12.9 6.3L10.8 7.5L8.7 8.2L7 7.9L6 6.8L5.7 4.9L6.9 3.3L7.8 2Z" fill="url(#lg3)"/></svg>
<span class="m" style="left:28px">系统</span>
<span class="m" style="left:71px">功能</span>
<span class="m" style="left:114px">报价</span>
<span class="m" style="left:157px">分析</span>
<span class="m" style="left:197px">扩展市场行情</span>
<span class="m" style="left:285px">资讯</span>
<span class="m" style="left:328px">工具</span>
<span class="m" style="left:371px">帮助</span>
<span class="t" style="left:981px">通达信金融终端</span><span class="t" style="left:1078px">科森科技</span>
</div>
<div id="tb">
<span class="p" style="left:6px">分时</span>
<span class="p" style="left:39.5px">1分钟</span>
<span class="p" style="left:79.5px">5分钟</span>
<span class="p" style="left:121.5px">15分钟</span>
<span class="p" style="left:169px">30分钟</span>
<span class="p" style="left:216.5px">60分钟</span>
<span class="p" style="left:265px;color:#00e0ff">日线</span>
<span class="p" style="left:298.5px">周线</span>
<span class="p" style="left:332.5px">月线</span>
<span class="p" style="left:366.5px">更多</span>
<span class="p" style="left:399px;top:27px;display:inline-block;transform:scale(0.85,1.55);transform-origin:0 50%">&gt;</span>
</div>
<div id="wm">www.cfchi.com</div>
</body></html>
